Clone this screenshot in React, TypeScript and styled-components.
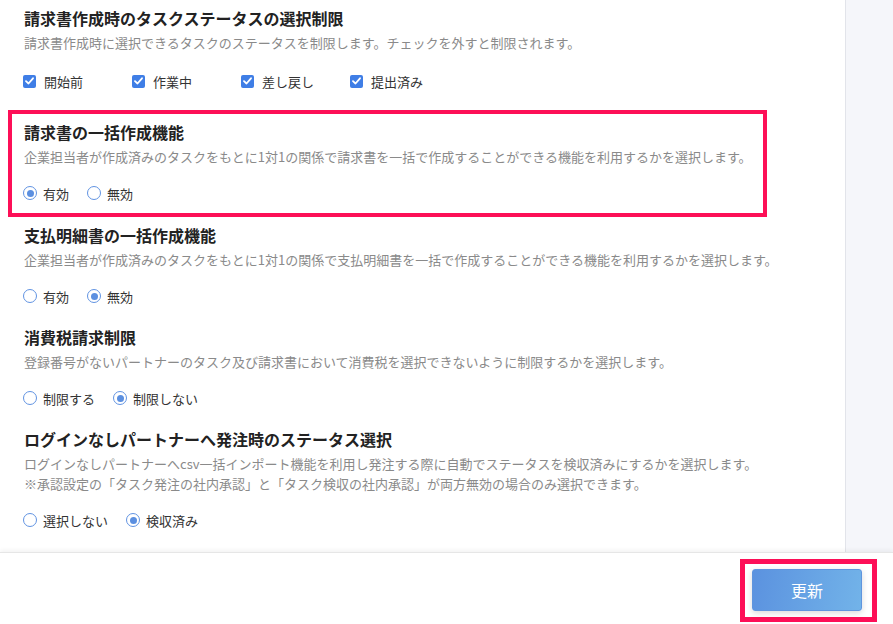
import React from 'react';
import styled, { createGlobalStyle } from 'styled-components';

const GlobalStyle = createGlobalStyle`
  html, body {
    margin: 0;
    padding: 0;
    background: #fff;
  }
  body {
    font-family: "Noto Sans CJK JP", "Noto Sans", sans-serif;
    color: #333;
  }
`;

const Page = styled.div`
  width: 893px;
  height: 624px;
  display: flex;
  flex-direction: column;
  overflow: hidden;
`;

const Body = styled.div`
  flex: 1;
  display: flex;
  min-height: 0;
`;

const Main = styled.div`
  width: 845px;
  padding: 6px 0 0 24px;
  box-sizing: border-box;
  background: #fff;
  overflow: hidden;
`;

const Side = styled.div`
  flex: 1;
  background: #f5f6fa;
  border-left: 1px solid #e2e4ea;
`;

const Section = styled.section<{ $last?: boolean }>`
  margin-bottom: ${(p) => (p.$last ? '0' : '19px')};
`;

// red annotation frame around a setting
const Highlight = styled.div`
  width: 759px;
  box-sizing: border-box;
  margin: 0 0 6px -16px;
  padding: 6px 12px 10px 12px;
  border: 4px solid #fd0f57;
`;

const Title = styled.h2`
  margin: 0;
  font-size: 16px;
  line-height: 24px;
  font-weight: 700;
  color: #222;
`;

const Desc = styled.p`
  margin: 3px 0 0;
  font-size: 13px;
  line-height: 20px;
  color: #8a8a8a;
  white-space: nowrap;
`;

const Options = styled.div<{ $spaced?: boolean }>`
  display: flex;
  align-items: center;
  margin-top: ${(p) => (p.$spaced ? '18px' : '16px')};
  height: 20px;
`;

const CheckItem = styled.label`
  width: 110px;
  display: flex;
  align-items: center;
  gap: 8px;
  font-size: 13px;
  color: #333;
  margin-left: -1px;
`;

const CheckBox = styled.span`
  width: 13px;
  height: 13px;
  border-radius: 2px;
  background: #3f7ee6;
  display: flex;
  align-items: center;
  justify-content: center;
`;

const RadioItem = styled.label`
  display: flex;
  align-items: center;
  gap: 6px;
  margin-right: 19px;
  font-size: 13px;
  color: #333;
  margin-left: -1px;
`;

const RadioCircle = styled.span<{ $on: boolean }>`
  width: 14px;
  height: 14px;
  box-sizing: border-box;
  border-radius: 50%;
  border: 1.5px solid #6193e2;
  display: flex;
  align-items: center;
  justify-content: center;
  &::after {
    content: '';
    width: 7px;
    height: 7px;
    border-radius: 50%;
    background: ${(p) => (p.$on ? '#5b8fe0' : 'transparent')};
  }
`;

const Footer = styled.footer`
  height: 72px;
  box-sizing: border-box;
  flex-shrink: 0;
  border-top: 1px solid #e6e6e6;
  box-shadow: 0 -2px 4px rgba(0, 0, 0, 0.05);
  background: #fff;
  display: flex;
  justify-content: flex-end;
  align-items: flex-start;
  padding: 6px 16px 0 0;
  position: relative;
`;

const ButtonHighlight = styled.div`
  border: 5px solid #fd0f57;
  padding: 5px 10px 6px 7px;
`;

const UpdateButton = styled.button`
  width: 110px;
  height: 42px;
  border: 1px solid #5f95de;
  border-radius: 3px;
  background: linear-gradient(100deg, #5b92df 0%, #72b3e9 100%);
  color: #fff;
  font-family: "Noto Sans CJK JP", "Noto Sans", sans-serif;
  font-size: 16px;
  box-shadow: 0 2px 6px rgba(0, 0, 0, 0.15);
  cursor: pointer;
`;

const Check = () => (
  <svg width="9" height="8" viewBox="0 0 9 8">
    <path d="M1 4.2 L3.5 6.5 L8 1.3" fill="none" stroke="#fff" strokeWidth="1.8" strokeLinecap="round" strokeLinejoin="round" />
  </svg>
);

const Radios = ({ items, selected }: { items: string[]; selected: number }) => (
  <Options>
    {items.map((t, i) => (
      <RadioItem key={t}>
        <RadioCircle $on={i === selected} />
        {t}
      </RadioItem>
    ))}
  </Options>
);

const statuses = ['開始前', '作業中', '差し戻し', '提出済み'];

export default function App() {
  return (
    <Page>
      <GlobalStyle />
      <Body>
        <Main>
          <Section>
            <Title>請求書作成時のタスクステータスの選択制限</Title>
            <Desc>請求書作成時に選択できるタスクのステータスを制限します。チェックを外すと制限されます。</Desc>
            <Options $spaced>
              {statuses.map((s) => (
                <CheckItem key={s}>
                  <CheckBox>
                    <Check />
                  </CheckBox>
                  {s}
                </CheckItem>
              ))}
            </Options>
          </Section>

          <Highlight>
            <Section $last>
              <Title>請求書の一括作成機能</Title>
              <Desc>企業担当者が作成済みのタスクをもとに1対1の関係で請求書を一括で作成することができる機能を利用するかを選択します。</Desc>
              <Radios items={['有効', '無効']} selected={0} />
            </Section>
          </Highlight>

          <Section>
            <Title>支払明細書の一括作成機能</Title>
            <Desc>企業担当者が作成済みのタスクをもとに1対1の関係で支払明細書を一括で作成することができる機能を利用するかを選択します。</Desc>
            <Radios items={['有効', '無効']} selected={1} />
          </Section>

          <Section>
            <Title>消費税請求制限</Title>
            <Desc>登録番号がないパートナーのタスク及び請求書において消費税を選択できないように制限するかを選択します。</Desc>
            <Radios items={['制限する', '制限しない']} selected={1} />
          </Section>

          <Section $last>
            <Title>ログインなしパートナーへ発注時のステータス選択</Title>
            <Desc>
              ログインなしパートナーへcsv一括インポート機能を利用し発注する際に自動でステータスを検収済みにするかを選択します。
              <br />
              ※承認設定の「タスク発注の社内承認」と「タスク検収の社内承認」が両方無効の場合のみ選択できます。
            </Desc>
            <Radios items={['選択しない', '検収済み']} selected={1} />
          </Section>
        </Main>
        <Side />
      </Body>
      <Footer>
        <ButtonHighlight>
          <UpdateButton>更新</UpdateButton>
        </ButtonHighlight>
      </Footer>
    </Page>
  );
}
